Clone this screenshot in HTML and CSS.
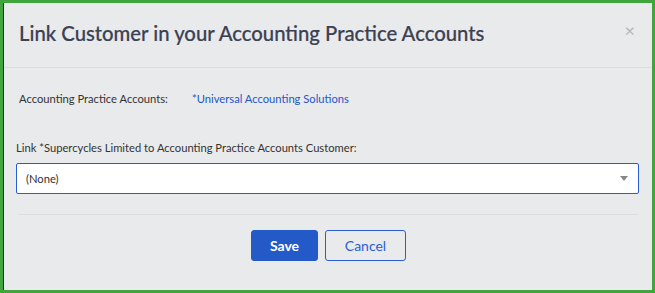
FILE: index.html
```html
<!DOCTYPE html>
<html lang="en">
<head>
  <meta charset="UTF-8" />
  <meta name="viewport" content="width=device-width, initial-scale=1.0" />
  <title>Link Customer</title>
  <link rel="stylesheet" href="styles.css">
</head>
<body>
<div class="modal">
  <div class="modal-header">
    <h2 class="modal-title">Link Customer in your Accounting Practice Accounts</h2>
    <span class="close">&times;</span>
  </div>
  <div class="modal-body">
    <div class="field-row">
      <span class="field-label">Accounting Practice Accounts:</span>
      <a class="field-link" href="#">*Universal Accounting Solutions</a>
    </div>
    <label class="select-label">Link *Supercycles Limited to Accounting Practice Accounts Customer:</label>
    <div class="select-box">
      <span>(None)</span>
      <span class="arrow"></span>
    </div>
  </div>
  <div class="modal-footer">
    <button class="btn btn-primary">Save</button>
    <button class="btn btn-outline">Cancel</button>
  </div>
</div>
</body>
</html>
```

FILE: styles.css
```css
html, body {
    margin: 0;
    padding: 0;
}
body {
    background: #41a53d;
    padding: 3px;
    height: 293px;
    box-sizing: border-box;
    font-family: Lato, "Open Sans", sans-serif;
}
.modal {
    background: #e9eaec;
    height: 287px;
    border-left: 1px solid #2b2f2b;
    box-sizing: border-box;
}
.modal-header {
    display: flex;
    align-items: center;
    justify-content: space-between;
    height: 64px;
    padding: 0 17px 0 15px;
    border-bottom: 1px solid #dcdde0;
}
.modal-title {
    margin: 0;
    font-size: 20.3px;
    font-weight: 500;
    color: #3c4152;
    padding-bottom: 5px;
    -webkit-text-stroke: 0.2px #3c4152;
}
.close {
    font-size: 18px;
    color: #b3b5b9;
    line-height: 1;
    padding-bottom: 10px;
}
.modal-body {
    padding: 24px 13px 0 12px;
}
.field-row {
    display: flex;
    align-items: center;
    font-size: 11.2px;
    padding-left: 3px;
}
.field-label {
    width: 173px;
    color: #333;
}
.field-link {
    color: #2456c8;
    text-decoration: none;
}
.select-label {
    display: block;
    margin-top: 36px;
    font-size: 11.2px;
    color: #333;
}
.select-box {
    display: flex;
    align-items: center;
    justify-content: space-between;
    margin-top: 9px;
    height: 31px;
    box-sizing: border-box;
    background: #fff;
    border: 1px solid #2a5dd5;
    border-radius: 2px;
    padding: 0 10px 0 9px;
    font-size: 11.2px;
    color: #333;
}
.arrow {
    width: 0;
    height: 0;
    border-left: 4px solid transparent;
    border-right: 4px solid transparent;
    border-top: 5px solid #888;
}
.modal-footer {
    display: flex;
    justify-content: center;
    gap: 7px;
    margin: 20px 14px 0 15px;
    padding-top: 15px;
    border-top: 1px solid #dcdde0;
}
.btn {
    height: 31px;
    border-radius: 3px;
    font-family: Lato, "Open Sans", sans-serif;
    font-size: 14px;
    cursor: pointer;
}
.btn-primary {
    width: 67px;
    background: #2459c8;
    border: 1px solid #2459c8;
    color: #fff;
    font-weight: 700;
}
.btn-outline {
    width: 81px;
    background: transparent;
    border: 1px solid #2a5dd5;
    color: #2a5dd5;
}
```
